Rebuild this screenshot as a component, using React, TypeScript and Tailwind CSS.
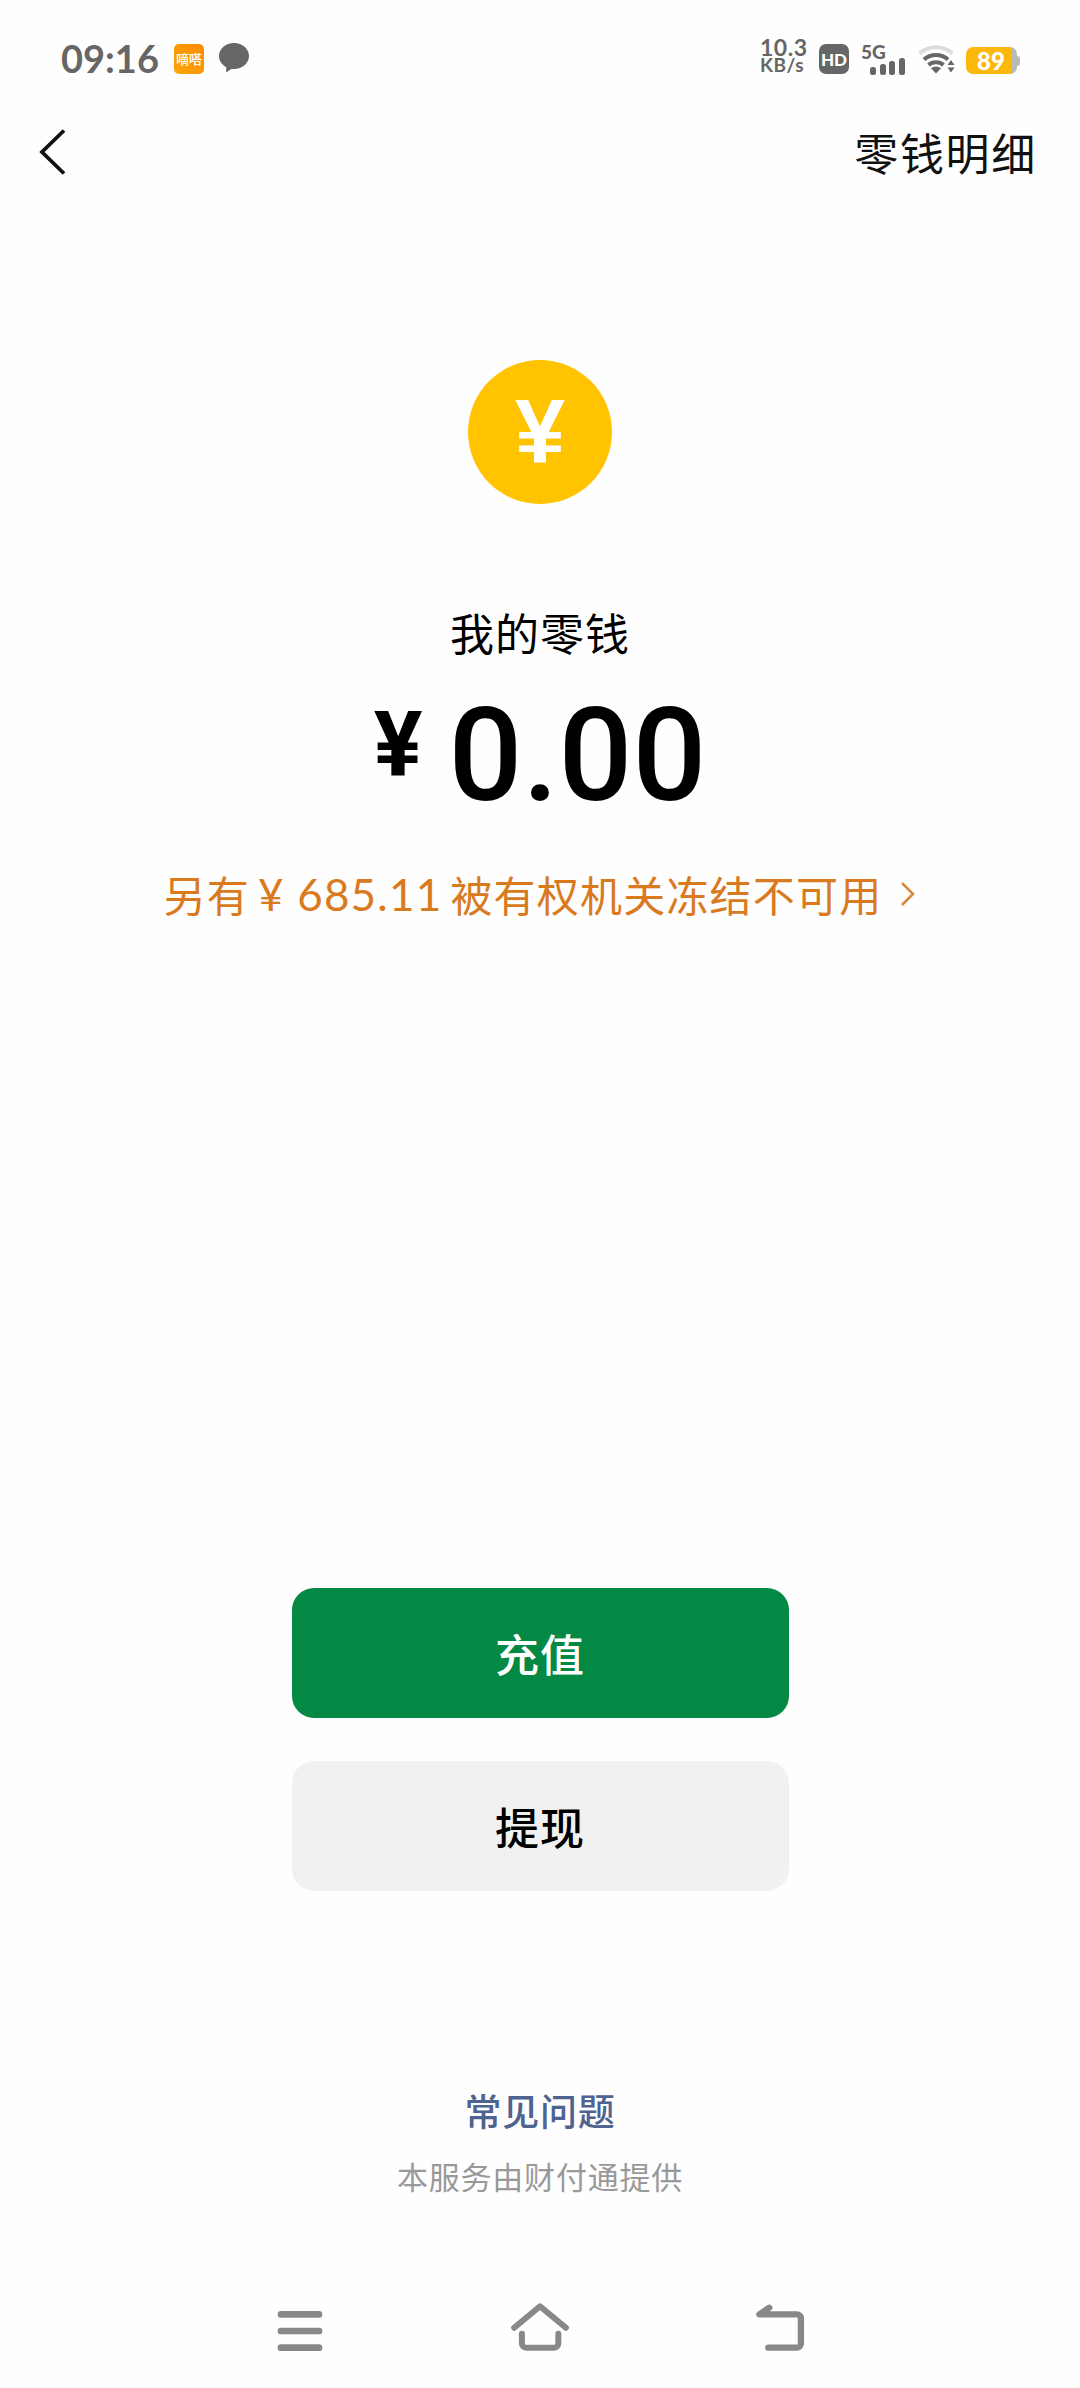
import React from 'react';

const ChatBubbleIcon: React.FC = () => (
    <svg width="30" height="30" viewBox="0 0 30 30" fill="#666666">
        <path d="M15 0C6.7 0 0 5.8 0 13c0 4.700 2.800 8.800 7.200 11.100V29.500l5.600-3.700c.7.1 1.500.2 2.200.2 8.300 0 15-5.800 15-13S23.300 0 15 0z" />
    </svg>
);

const SignalIcon: React.FC = () => (
    <svg width="36" height="17" viewBox="0 0 36 17" fill="#666666">
        <rect x="0" y="9" width="6" height="8" rx="2.500" />
        <rect x="10" y="6" width="6" height="11" rx="2.500" />
        <rect x="19" y="3" width="6" height="14" rx="2.500" />
        <rect x="29" y="0" width="6" height="17" rx="2.500" />
    </svg>
);

const WifiIcon: React.FC = () => (
    <svg width="38" height="30" viewBox="0 0 38 30" fill="none" strokeWidth="4">
        <path d="M1.500 9.500a25 25 0 0 1 33 0" stroke="#dddddd" />
        <path d="M6 15.500a18 18 0 0 1 24 0" stroke="#666666" />
        <path d="M10.500 21a11.500 11.500 0 0 1 15 0" stroke="#666666" />
        <path d="M13 24.300a7.500 7.500 0 0 1 10 0L18 29.500z" fill="#666666" />
        <path d="M29.500 21l3.500-5 3.500 5zM29.500 23.500l3.500 5 3.500-5z" fill="#666666" />
    </svg>
);

const MenuIcon: React.FC = () => (
    <svg width="60" height="54" viewBox="0 0 60 54" fill="none" stroke="#888888" strokeWidth="6.700" strokeLinecap="round">
        <path d="M11 14.400h38M11 31h38M11 47.700h38" />
    </svg>
);

const HomeIcon: React.FC = () => (
    <svg width="60" height="54" viewBox="0 0 60 54" fill="none" stroke="#888888" strokeWidth="6" strokeLinecap="round" strokeLinejoin="round">
        <path d="M4.200 27.700L30 6.300l25.900 21.400" />
        <path d="M11.900 33.800v9.700a4.200 4.200 0 0 0 4.200 4.200h28a4.200 4.200 0 0 0 4.200-4.200v-9.700" />
    </svg>
);

const ReturnIcon: React.FC = () => (
    <svg width="60" height="54" viewBox="0 0 60 54" fill="none" stroke="#888888" strokeWidth="6.300" strokeLinecap="round" strokeLinejoin="round">
        <path d="M19.300 7.700L9.400 14.400h37.500a4 4 0 0 1 4 4v25.300a4 4 0 0 1-4 4H18.300" />
    </svg>
);

const StatusBar: React.FC = () => (
    <div className="flex h-[100px] items-start justify-between pl-[61px] pr-[60px] pt-[38px] font-['Lato','Noto_Sans_CJK_SC',sans-serif] text-[#666666]">
        <div className="flex h-10 items-center">
            <span className="w-[113px] text-[38px] font-bold leading-10">09:16</span>
            <span className="mr-[15px] mt-0.5 flex h-[30px] w-[30px] items-center justify-center rounded-[5px] bg-gradient-to-bl from-[#ff8a00] to-[#fba60a] text-[13px] font-medium leading-none text-white">
                嘀嗒
            </span>
            <ChatBubbleIcon />
        </div>

        <div className="flex h-10 items-start">
            <div className="w-[59px] text-[21px] font-bold leading-[18px] tracking-[0.500px]">
                <div className="text-[23px]">10.3</div>
                <div className="text-[19px]">KB/s</div>
            </div>
            <div className="mr-3 mt-1.5 flex h-[30px] w-[30px] items-center justify-center rounded-[7px] bg-[#666666] text-[17px] font-black leading-none text-white">
                HD
            </div>
            <div className="mr-3 mt-1.5 flex w-[45px] flex-col">
                <span className="h-[14px] text-[19px] font-black leading-[15px]">5G</span>
                <span className="pl-[9px]"><SignalIcon /></span>
            </div>
            <div className="mr-[10px] mt-1.5"><WifiIcon /></div>
            <div className="mt-[9px] flex items-center">
                <div className="flex h-[27px] w-[51px] items-center justify-center rounded-[7px] border-r-[5px] border-[#b9b9b9] bg-[#fdb90b] pl-1 text-[24px] font-black leading-none text-white">
                    89
                </div>
                <div className="h-[10px] w-[3px] rounded-r-sm bg-[#b9b9b9]" />
            </div>
        </div>
    </div>
);

const App: React.FC = () => {
    return (
        <div className="flex h-[2388px] w-[1080px] flex-col bg-[#fefefe] font-['Noto_Sans_CJK_SC',sans-serif] text-black">
            <StatusBar />

            {/* Header */}
            <header className="flex h-[104px] items-center justify-between pl-[39px] pr-[43px]">
                <svg width="28" height="46" viewBox="0 0 28 46" fill="none" stroke="#111111" strokeWidth="3.800">
                    <path d="M25 1.500L3 23l22 21.500" />
                </svg>
                <span className="text-[44px] leading-[60px] tracking-[1.700px] text-[#111111]">零钱明细</span>
            </header>

            {/* Balance */}
            <main className="flex flex-1 flex-col items-center">
                <div className="mt-[156px] flex h-36 w-36 items-center justify-center rounded-full bg-[#ffc300] font-['Liberation_Sans',sans-serif] text-[90px] font-bold leading-none text-white">
                    ¥
                </div>
                <div className="mt-[98px] text-[44px] leading-[60px] tracking-[1px]">我的零钱</div>
                <div className="mt-[18px] flex h-[160px] items-start font-['Roboto',sans-serif]">
                    <span className="mr-[26px] mt-[12px] text-[91px] font-bold leading-[106px]">¥</span>
                    <span className="text-[130px] font-medium leading-[152px]">0.00</span>
                </div>

                <div className="mt-[24px] flex items-center text-[42px] leading-[60px] tracking-[1.200px] text-[#d97a1e]">
                    <span>另有</span>
                    <span className="mx-2 font-['Lato',sans-serif] text-[44px]">¥ 685.11</span>
                    <span>被有权机关冻结不可用</span>
                    <svg className="ml-[18px]" width="16" height="26" viewBox="0 0 16 26" fill="none" stroke="#d98a3e" strokeWidth="2.600">
                        <path d="M2 2l11 11L2 24" />
                    </svg>
                </div>

                <div className="mt-auto flex flex-col gap-[43px]">
                    <button className="h-[130px] w-[497px] rounded-[22px] bg-[#038943] text-[44px] font-medium tracking-[1px] text-white">充值</button>
                    <button className="h-[130px] w-[497px] rounded-[22px] bg-[#f1f1f1] text-[44px] font-medium tracking-[1px]">提现</button>
                </div>
            </main>

            <footer className="flex flex-col items-center pt-[194px]">
                <a className="text-[37px] font-medium leading-[50px] tracking-[0.800px] text-[#4f6390]">常见问题</a>
                <p className="mt-[20px] text-[31px] leading-[42px] tracking-[0.800px] text-[#999999]">本服务由财付通提供</p>
            </footer>

            {/* System navigation */}
            <nav className="mt-[103px] flex h-[88px] items-start justify-between px-[270px]">
                <MenuIcon />
                <HomeIcon />
                <ReturnIcon />
            </nav>
        </div>
    );
};

export default App;
